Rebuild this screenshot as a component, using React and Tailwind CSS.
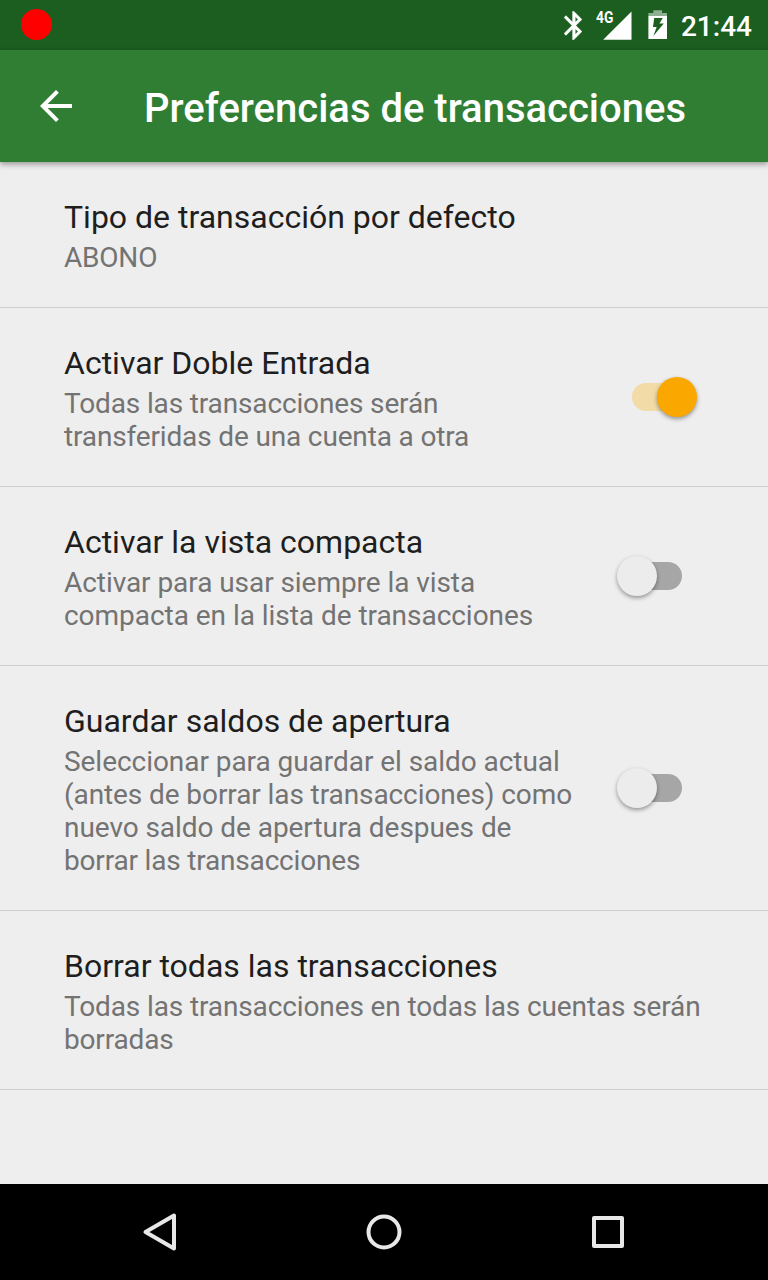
const preferences = [
  {
    title: 'Tipo de transacción por defecto',
    summary: [{ text: 'ABONO', tracking: 'tracking-[-0.2px]' }],
  },
  {
    title: 'Activar Doble Entrada',
    summary: [
      { text: 'Todas las transacciones serán', tracking: 'tracking-[-0.14px]' },
      { text: 'transferidas de una cuenta a otra', tracking: 'tracking-[-0.15px]' },
    ],
    checked: true,
  },
  {
    title: 'Activar la vista compacta',
    summary: [
      { text: 'Activar para usar siempre la vista', tracking: 'tracking-[-0.06px]' },
      { text: 'compacta en la lista de transacciones', tracking: 'tracking-[-0.04px]' },
    ],
    checked: false,
  },
  {
    title: 'Guardar saldos de apertura',
    summary: [
      { text: 'Seleccionar para guardar el saldo actual', tracking: 'tracking-[-0.05px]' },
      { text: '(antes de borrar las transacciones) como', tracking: 'tracking-[-0.09px]' },
      { text: 'nuevo saldo de apertura despues de', tracking: 'tracking-[-0.06px]' },
      { text: 'borrar las transacciones', tracking: 'tracking-[-0.18px]' },
    ],
    checked: false,
  },
  {
    title: 'Borrar todas las transacciones',
    summary: [
      { text: 'Todas las transacciones en todas las cuentas serán', tracking: 'tracking-[-0.12px]' },
      { text: 'borradas', tracking: 'tracking-[-0.16px]' },
    ],
  },
];

function StatusBar() {
  return (
    <div className="flex h-[50px] shrink-0 items-center justify-between bg-[#1c5e20] pl-[21px] pr-4">
      <div className="mb-px size-[31px] rounded-full bg-[#ff0000]" />
      <div className="flex items-center text-white">
        <svg className="mr-[14px] h-[29px] w-[18px]" viewBox="5 2 12.71 20" fill="currentColor" stroke="currentColor" strokeWidth="0.2">
          <path d="M17.71 7.71L12 2h-1v7.59L6.41 5 5 6.41 10.59 12 5 17.59 6.41 19 11 14.41V22h1l5.71-5.71-4.300-4.290 4.300-4.290zM13 5.830l1.880 1.880L13 9.590V5.830zm1.880 10.460L13 18.170v-3.760l1.880 1.880z" />
        </svg>
        <div className="relative mr-4 h-[29px] w-[36px]">
          <svg className="h-[29px] w-[36px]" viewBox="0 0 36 29" fill="currentColor">
            <path d="M35.5 .5v28.2H7.2z" />
          </svg>
          <span className="absolute left-0 top-0 origin-left scale-x-[0.86] text-[16px] font-bold leading-[14px]">4G</span>
        </div>
        <svg className="mr-[13px] h-[30px] w-5" viewBox="0 0 20 30" fill="currentColor">
          <path d="M5.300 .3h8.800v2.700H19v3H.4V3h4.900z" opacity=".5" />
          <path fillRule="evenodd" d="M.4 6H19V29H.4zM6.200 8 5 17h3.700L5.300 26 15.800 13.500h-4.400L14.800 8z" />
        </svg>
        <span className="pt-1 text-[28px] font-medium leading-[34px]">21:44</span>
      </div>
    </div>
  );
}

function Toolbar() {
  return (
    <header className="z-10 flex h-28 shrink-0 items-center bg-[#2f7e33] pl-8 text-white shadow-[0_2px_6px_rgba(0,0,0,0.4)]">
      <svg className="size-12" viewBox="0 0 24 24" fill="currentColor">
        <path d="M20 11H7.830l5.590-5.590L12 4l-8 8 8 8 1.410-1.410L7.830 13H20z" />
      </svg>
      <h1 className="ml-16 pt-1.5 text-[40px] font-medium leading-[48px]">Preferencias de transacciones</h1>
    </header>
  );
}

function Switch({ checked }) {
  return (
    <div
      role="switch"
      aria-checked={checked}
      className={`relative h-7 w-[50px] shrink-0 rounded-full ${checked ? 'bg-[#f3dba7]' : 'bg-[#a6a6a6]'}`}
    >
      <div
        className={`absolute -top-1.5 size-10 rounded-full shadow-[0_2px_4px_rgba(0,0,0,0.38)] ${
          checked ? 'left-[25px] bg-[#faa700]' : '-left-[15px] bg-[#ececec]'
        }`}
      />
    </div>
  );
}

function Preference({ title, summary, checked }) {
  return (
    <li className="flex items-center justify-between border-b border-[#d0d0d0] pl-16 pr-[86px]">
      <div className="whitespace-nowrap pb-[33px] pt-9">
        <h2 className="text-[32px] leading-[38px] text-[#1e1e1e]">{title}</h2>
        <p className="mt-[5px] text-[28px] leading-[33px] text-[#737373]">
          {summary.map(({ text, tracking }) => (
            <span key={text} className={`block ${tracking}`}>{text}</span>
          ))}
        </p>
      </div>
      {checked !== undefined && <Switch checked={checked} />}
    </li>
  );
}

function NavigationBar() {
  return (
    <nav className="flex h-24 shrink-0 items-center justify-center gap-[164px] bg-black text-[#e8e8e8]">
      <svg className="size-[60px]" viewBox="0 0 60 60" fill="none" stroke="currentColor" strokeWidth="4" strokeLinejoin="round">
        <path d="M15.500 30 44 13.500v33z" />
      </svg>
      <svg className="size-[60px]" viewBox="0 0 60 60" fill="none" stroke="currentColor" strokeWidth="4">
        <circle cx="30" cy="30" r="15.500" />
      </svg>
      <svg className="size-[60px]" viewBox="0 0 60 60" fill="none" stroke="currentColor" strokeWidth="4" strokeLinejoin="round">
        <path d="M16 16h28v28H16z" />
      </svg>
    </nav>
  );
}

export default function App() {
  return (
    <div className="flex h-[1280px] w-[768px] flex-col overflow-hidden bg-[#eeeeee] font-[Roboto,sans-serif]">
      <StatusBar />
      <Toolbar />
      <ul className="flex-1">
        {preferences.map((item) => (
          <Preference key={item.title} {...item} />
        ))}
      </ul>
      <NavigationBar />
    </div>
  );
}
